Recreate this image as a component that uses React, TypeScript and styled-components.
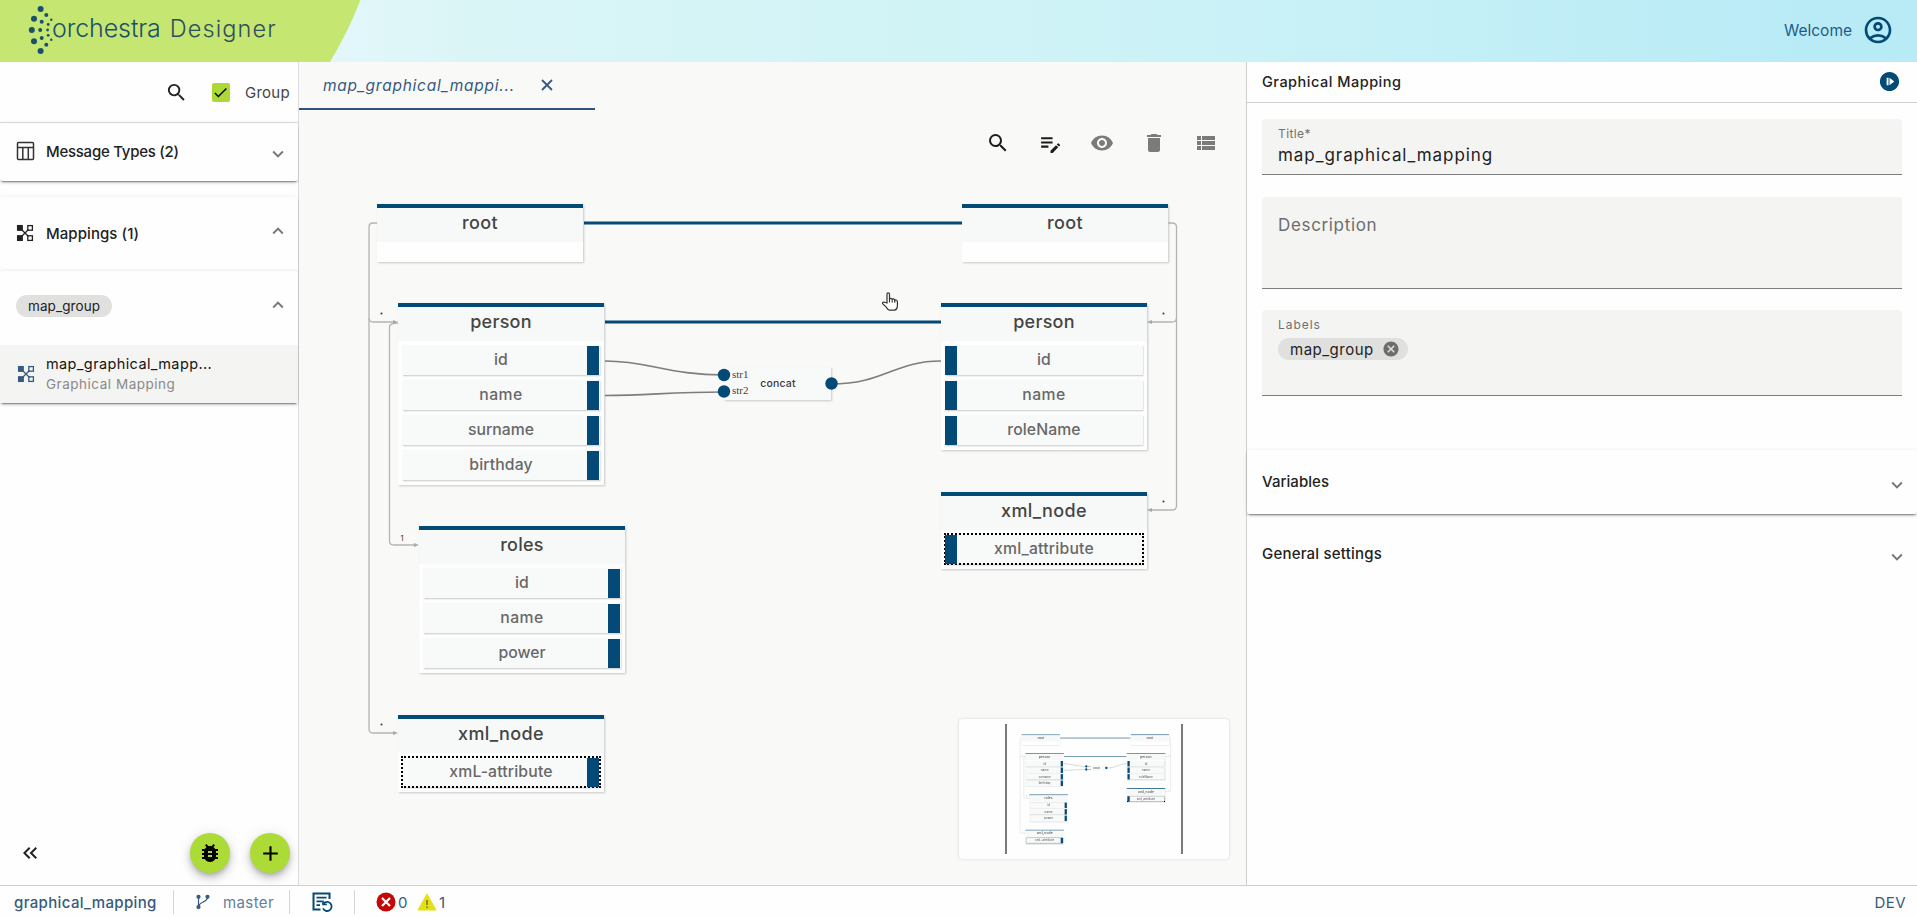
import React, { useState } from "react";
import styled, { createGlobalStyle } from "styled-components";
import {
  MdSearch,
  MdEditNote,
  MdVisibility,
  MdDelete,
  MdViewList,
  MdBugReport,
  MdAdd,
  MdKeyboardDoubleArrowLeft,
  MdOutlineAccountCircle,
  MdExpandMore,
  MdExpandLess,
  MdCancel,
  MdNotStarted,
  MdCheck,
} from "react-icons/md";

const GlobalStyle = createGlobalStyle`
  * {
    box-sizing: border-box;
  }
  body {
    margin: 0;
    background: #fefefe;
    color: #222;
    font-family: Inter, "Open Sans", sans-serif;
    overflow: hidden;
  }
`;

const NAVY = "#044a77";
const STEEL = "#365a80";

// --- shell ---
const Page = styled.div`
  display: grid;
  grid-template-rows: 62px 1fr 32px;
  width: 100vw;
  height: 100vh;
`;

const Main = styled.main`
  display: grid;
  grid-template-columns: 299px 1fr 671px;
  min-height: 0;
`;

// --- header ---
const Header = styled.header`
  display: flex;
  justify-content: space-between;
  background: linear-gradient(90deg, #e3f7fb 330px, #daf5f6 480px, #cbf2f7 1200px, #b9ebf6 1800px);
`;

const Brand = styled.div`
  display: flex;
  width: 361px;
  height: 62px;
  background: #c5e772;
  clip-path: path("M0 0 H360.5 Q348 32 330 62 H0 Z");
`;

const BrandName = styled.span`
  margin: 13px 0 0 -3px;
  font-size: 25px;
  font-weight: 300;
  line-height: 30px;
  letter-spacing: -0.1px;
  color: #1b4f6c;
`;

const ProductName = styled.span`
  margin: 14px 0 0 9px;
  font-size: 23.5px;
  font-weight: 300;
  line-height: 30px;
  letter-spacing: 1.1px;
  color: #2d4f5c;
`;

const UserArea = styled.div`
  display: flex;
  align-items: center;
  gap: 10px;
  height: 60px;
  padding-right: 23px;
  font-size: 15.5px;
  color: #1d5c8a;

  svg {
    color: ${NAVY};
  }
`;

// --- sidebar ---
const Sidebar = styled.aside`
  display: flex;
  flex-direction: column;
  border-right: 1px solid #dcdcdc;
`;

const FilterBar = styled.div`
  display: flex;
  align-items: center;
  justify-content: flex-end;
  height: 61px;
  padding-right: 8px;
  border-bottom: 1px solid #dcdcdc;
`;

const CheckBox = styled.button`
  display: grid;
  place-items: center;
  width: 18px;
  height: 19px;
  margin: 0 15px 0 24px;
  padding: 0;
  border: 0;
  border-radius: 2px;
  background: #acd938;
  color: #000;
`;

const GroupLabel = styled.label`
  font-size: 15px;
  letter-spacing: 0.29px;
  color: #444;
`;

const Panel = styled.section<{ $gap?: number }>`
  margin-top: ${(props) => props.$gap || 0}px;
  border-radius: 3px;
  background: #fefefe;
  box-shadow: 0 3px 1px -2px rgba(0, 0, 0, 0.3), 0 2px 2px rgba(0, 0, 0, 0.16),
    0 1px 5px rgba(0, 0, 0, 0.1);
`;

const InnerPanel = styled.div`
  border-radius: 3px;
  box-shadow: 0 -1px 3px rgba(0, 0, 0, 0.07);
`;

const PanelHead = styled.div<{ $height: number; $drop?: number }>`
  display: flex;
  align-items: center;
  height: ${(props) => props.$height}px;
  padding: 0 9px 2px 15px;
  font-size: 15px;
  font-weight: 500;

  > svg:first-child {
    margin-right: 11px;
  }
  > svg:last-child {
    margin-left: auto;
    color: #777;
    transform: translateY(${(props) => props.$drop || 0}px);
  }
`;

const PanelTitle = styled.span<{ $spacing: number }>`
  letter-spacing: ${(props) => props.$spacing}px;
`;

const Tag = styled.span`
  height: 22px;
  margin: -3px 0 0 1px;
  padding: 0 12px;
  border-radius: 11px;
  background: #e0e0df;
  font-size: 13.5px;
  font-weight: 400;
  line-height: 22px;
  letter-spacing: 0.1px;
`;

const Item = styled.div`
  display: flex;
  align-items: center;
  gap: 10px;
  height: 58px;
  padding-left: 16px;
  background: #f4f4f3;
  color: ${STEEL};
`;

const ItemName = styled.div`
  font-size: 14.5px;
  line-height: 20px;
  letter-spacing: 0.38px;
  color: #151515;
`;

const ItemKind = styled.div`
  font-size: 13.5px;
  line-height: 20px;
  letter-spacing: 0.52px;
  color: #8a8a8a;
`;

const SidebarActions = styled.div`
  display: flex;
  align-items: center;
  gap: 20px;
  height: 64px;
  margin-top: auto;
  padding: 0 8px 0 18px;

  > svg {
    margin-right: auto;
  }
`;

const RoundButton = styled.button`
  display: grid;
  place-items: center;
  width: 40px;
  height: 40px;
  padding: 0;
  border: 0;
  border-radius: 50%;
  background: #acda37;
  color: #000;
  box-shadow: 0 3px 5px -1px rgba(0, 0, 0, 0.2), 0 6px 10px rgba(0, 0, 0, 0.14),
    0 1px 14px rgba(0, 0, 0, 0.1);
`;

// --- editor ---
const Editor = styled.section`
  display: flex;
  flex-direction: column;
  background: #f9f9f8;
  min-width: 0;
`;

const Tab = styled.div`
  display: flex;
  align-items: center;
  justify-content: space-between;
  width: 296px;
  height: 48px;
  padding: 0 42px 0 24px;
  border-bottom: 2px solid #2f5579;
  font-size: 15.5px;
  font-style: italic;
  letter-spacing: 0.74px;
  color: ${STEEL};
`;

const Canvas = styled.div`
  position: relative;
  display: flex;
  flex: 1;
  flex-direction: column;
  justify-content: space-between;
  align-items: flex-end;
  padding: 21px 28px 26px 0;
`;

const Toolbar = styled.div`
  display: flex;
  gap: 28px;
`;

const Tool = styled.button<{ $enabled?: boolean }>`
  display: grid;
  place-items: center;
  width: 24px;
  height: 24px;
  padding: 0;
  border: 0;
  background: none;
  color: ${(props) => (props.$enabled ? "#1c1c1c" : "#7b7b7b")};
`;

const Layer = styled.div`
  position: absolute;
  left: 0;
  top: 0;
  width: 947px;
  height: 775px;
  pointer-events: none;
`;

const Edges = styled.svg`
  position: absolute;
  left: 0;
  top: 0;
`;

const PortLabel = styled.text`
  font-family: "Liberation Serif", serif;
  font-size: 11px;
  fill: #444;
`;

const NodeBox = styled.div<{ $x: number; $y: number }>`
  position: absolute;
  left: ${(props) => props.$x}px;
  top: ${(props) => props.$y}px;
  width: 206px;
  border-top: 4px solid ${NAVY};
  background: #fefefe;
  box-shadow: 1px 1px 2px rgba(0, 0, 0, 0.2);
`;

const NodeTitle = styled.div<{ $spacing: number }>`
  height: 34px;
  background: #f7f9f9;
  font-size: 18px;
  font-weight: 500;
  line-height: 29px;
  letter-spacing: ${(props) => props.$spacing}px;
  text-align: center;
  color: #454545;
`;

const Fields = styled.div<{ $empty: boolean }>`
  display: flex;
  flex-direction: column;
  gap: 5px;
  padding: ${(props) => (props.$empty ? "20px 0 0" : "4px 4px 5px 4px")};
`;

const Field = styled.div<{ $dotted?: boolean }>`
  display: grid;
  grid-template-columns: 12px 1fr 12px;
  height: 30px;
  padding-top: 1px;
  background: #f8f9f9;
  box-shadow: 0.5px 1px 1.5px rgba(0, 0, 0, 0.25);
  outline: ${(props) => (props.$dotted ? "2px dotted #000" : "none")};
  outline-offset: -1px;
`;

const FieldName = styled.span<{ $spacing: number }>`
  grid-column: 2;
  font-size: 15.75px;
  font-weight: 500;
  line-height: 28px;
  letter-spacing: ${(props) => props.$spacing}px;
  text-align: center;
  color: #686868;
`;

const Port = styled.i<{ $side: "left" | "right" }>`
  grid-column: ${(props) => (props.$side === "left" ? 1 : 3)};
  grid-row: 1;
  position: relative;
  left: ${(props) => (props.$side === "left" ? 0 : -1)}px;
  background: ${NAVY};
`;

const FunctionBox = styled.div`
  position: absolute;
  left: 425px;
  top: 257px;
  width: 107px;
  height: 33px;
  display: grid;
  place-items: center;
  padding: 0 0 1px 1px;
  background: #f8f9f9;
  box-shadow: 1px 1px 2px rgba(0, 0, 0, 0.2);
  font-size: 10.5px;
  font-weight: 500;
  letter-spacing: 0.2px;
  color: #3c3c3c;
`;

const Minimap = styled.div`
  position: relative;
  width: 270px;
  height: 140px;
  overflow: hidden;
  border-radius: 4px;
  background: #fefefe;
  box-shadow: 0 0 3px rgba(0, 0, 0, 0.15);
  margin-right: -11px;
`;

const MinimapScale = styled.div`
  position: absolute;
  left: 47.5px;
  top: -2.5px;
  transform: scale(0.1865);
  transform-origin: 0 0;
`;

const Viewport = styled.div`
  position: absolute;
  left: 46px;
  top: 5px;
  width: 178px;
  height: 130px;
  border: solid #7a7a7a;
  border-width: 0 2px;
`;

const Cursor = styled.svg`
  position: absolute;
  left: 582px;
  top: 181px;
`;

// --- properties ---
const Properties = styled.aside`
  border-left: 1px solid #cfcfcf;
`;

const PropertiesHead = styled.div`
  display: flex;
  align-items: center;
  justify-content: space-between;
  height: 41px;
  padding: 0 16px 2px 15px;
  border-bottom: 1px solid #cfcfcf;
  font-size: 14.5px;
  font-weight: 500;
  letter-spacing: 0.5px;

  svg {
    color: ${NAVY};
  }
`;

const Form = styled.div`
  display: grid;
  padding: 16px 15px 0;
`;

const FormField = styled.div<{ $height: number; $gap?: number }>`
  height: ${(props) => props.$height}px;
  margin-top: ${(props) => props.$gap || 0}px;
  padding: 7px 16px;
  border-bottom: 1px solid #7e7e7e;
  border-radius: 4px 4px 0 0;
  background: #f4f4f3;
`;

const Label = styled.div<{ $spacing: number }>`
  font-size: 12px;
  line-height: 16px;
  letter-spacing: ${(props) => props.$spacing}px;
  color: #707070;
`;

const Value = styled.div`
  margin-top: 3px;
  font-size: 17px;
  line-height: 21px;
  letter-spacing: 0.95px;
`;

const Placeholder = styled.div`
  margin-top: 10px;
  font-size: 17px;
  line-height: 22px;
  letter-spacing: 0.66px;
  color: #6d6d6d;
`;

const Chip = styled.span`
  display: inline-flex;
  align-items: center;
  gap: 8px;
  height: 22px;
  margin-top: 5px;
  padding: 0 8px 0 12px;
  border-radius: 11px;
  background: #e0e0df;
  font-size: 15px;
  letter-spacing: 0.5px;

  svg {
    color: #6d6d6d;
  }
`;

const SettingsPanels = styled.div`
  margin-top: 54px;
`;

// --- status bar ---
const StatusBar = styled.footer`
  display: flex;
  align-items: center;
  border-top: 1px solid #cfcfcf;
  padding: 1px 11px 0 14px;
  font-size: 15px;
  color: ${STEEL};
`;

const Project = styled.span`
  width: 159px;
  font-weight: 500;
  letter-spacing: 0.35px;
`;

const StatusCell = styled.div<{ $width: number; $gap?: number }>`
  display: flex;
  align-items: center;
  gap: ${(props) => props.$gap || 0}px;
  width: ${(props) => props.$width}px;
  height: 24px;
  padding-left: 21px;
  border-left: 1px solid #d5d5d5;
`;

const Branch = styled.span`
  letter-spacing: 0.4px;
  color: #647f99;
`;

const Count = styled.span`
  width: 17px;
`;

const Stage = styled.span`
  margin-left: auto;
  font-size: 15px;
  letter-spacing: 0.4px;
`;

const logoDots = [
  [40.6, 9, 3], [46.3, 15, 2], [34, 18.7, 3], [51.3, 19.7, 1.2], [41.7, 21.7, 2],
  [48.2, 24.5, 1.4], [31.8, 30, 3], [40.2, 30, 2], [47.6, 30, 1.4], [48.2, 35.3, 1.4],
  [41.7, 38, 2], [51.3, 39.7, 1.2], [34, 41.3, 3], [46.3, 44.7, 2], [40.6, 51, 3],
];

function LogoMark() {
  return (
    <svg width="55" height="62">
      {logoDots.map(([x, y, r]) => (
        <circle key={`${x}-${y}`} cx={x} cy={y} r={r} fill="#1b4f6c" />
      ))}
    </svg>
  );
}

function TableIcon() {
  return (
    <svg width="20" height="20" fill="none" stroke="#333" strokeWidth="1.5">
      <rect x="2.5" y="1.5" width="16" height="17" rx="1" />
      <path d="M2.5 6.6H18.5M7.8 6.6V18.5M13.3 6.6V18.5" />
    </svg>
  );
}

function MappingIcon() {
  return (
    <svg width="20" height="20" fill="none" stroke="currentColor" strokeWidth="1.3">
      <path d="M6.5 6.5L13.5 13.5M13.5 6.5L6.5 13.5" />
      <rect x="2.6" y="2.6" width="4.6" height="4.6" fill="currentColor" />
      <rect x="2.6" y="12.8" width="4.6" height="4.6" fill="currentColor" />
      <rect x="12.8" y="2.6" width="4.6" height="4.6" />
      <rect x="12.8" y="12.8" width="4.6" height="4.6" />
    </svg>
  );
}

function BranchIcon() {
  return (
    <svg width="16" height="16" fill="none" stroke={STEEL} strokeWidth="1.2">
      <path d="M3.5 3V13M12.5 3C12.5 9 4 7 3.5 13" />
      <circle cx="3.5" cy="2.8" r="1.5" fill={STEEL} />
      <circle cx="12.5" cy="2.8" r="1.5" fill={STEEL} />
      <circle cx="3.5" cy="13" r="1.5" fill={STEEL} />
    </svg>
  );
}

function HistoryIcon() {
  return (
    <svg width="22" height="22" fill="none" stroke={NAVY} strokeWidth="2">
      <path d="M18.5 8V2.5H2.5V18.5H9.5" />
      <path d="M5.5 6.6H15.5M5.5 10.4H11M5.5 14.2H9" strokeWidth="1.8" />
      <path d="M12.6 12.6A4.5 4.5 0 1 1 12 17.4" strokeWidth="1.8" />
      <path d="M12 9.6V13.4H15.8" strokeWidth="1.7" />
    </svg>
  );
}

function ErrorIcon() {
  return (
    <svg width="20" height="20">
      <circle cx="10" cy="10" r="9.5" fill="#c40808" />
      <path d="M6 6L14 14M14 6L6 14" stroke="#fff" strokeWidth="2.2" />
    </svg>
  );
}

function WarningIcon() {
  return (
    <svg width="20" height="18">
      <path d="M10 1L19 17H1Z" fill="#e4e016" stroke="#e4e016" />
      <path d="M10 7V12M10 13.5V15" stroke="#707020" strokeWidth="1.5" />
    </svg>
  );
}

type GraphNode = {
  name: string;
  spacing: number;
  x: number;
  y: number;
  side: "left" | "right";
  fields: [string, number][];
  dotted?: boolean;
};

const nodes: GraphNode[] = [
  { name: "root", spacing: 0.4, x: 78, y: 94, side: "right", fields: [] },
  {
    name: "person", spacing: 0.25, x: 99, y: 193, side: "right",
    fields: [["id", 0.1], ["name", 0.4], ["surname", 0], ["birthday", 0.11]],
  },
  {
    name: "roles", spacing: 0.25, x: 120, y: 416, side: "right",
    fields: [["id", 0.1], ["name", 0.4], ["power", 0]],
  },
  { name: "xml_node", spacing: 0.35, x: 99, y: 605, side: "right", fields: [["xmL-attribute", 0.16]], dotted: true },
  { name: "root", spacing: 0.4, x: 663, y: 94, side: "left", fields: [] },
  {
    name: "person", spacing: 0.25, x: 642, y: 193, side: "left",
    fields: [["id", 0.1], ["name", 0.4], ["roleName", 0.1]],
  },
  { name: "xml_node", spacing: 0.35, x: 642, y: 382, side: "left", fields: [["xml_attribute", 0.2]], dotted: true },
];

function Diagram() {
  return (
    <Layer>
      <Edges width="947" height="775" fill="none">
        <path d="M285 113H663M306 212H642" stroke={NAVY} strokeWidth="3" />
        <g stroke="#b4b4b4" strokeWidth="1.3">
          <path d="M78 113H74Q70 113 70 117V208Q70 212 74 212H95" />
          <path d="M70 208V619Q70 623 74 623H95" />
          <path d="M99 213Q90.5 213 90.5 217V431Q90.5 435 95 435H116" />
          <path d="M869.5 113H873Q877.5 113 877.5 117V208Q877.5 212 873 212H853" />
          <path d="M877.5 208V396Q877.5 400 873 400H853" />
        </g>
        <g fill="#a9a9a9">
          <path d="M94 210L99 212L94 214Z M94 621L99 623L94 625Z M115 433L120 435L115 437Z" />
          <path d="M853 210L848 212L853 214Z M853 398L848 400L853 402Z" />
        </g>
        <g stroke="#7d7d7d" strokeWidth="1.6">
          <path d="M306 251C350 251 370 265 425 265M306 285.5C350 285.5 370 282 425 282" />
          <path d="M532 274C585 274 595 251 642 251" />
        </g>
        <g fill="#333">
          <circle cx="82.5" cy="203.5" r="1" />
          <circle cx="82.5" cy="614.5" r="1" />
          <circle cx="864.5" cy="203.5" r="1" />
          <circle cx="864.5" cy="391.5" r="1" />
        </g>
        <text x="101.5" y="431" fontSize="7.5" fill="#333">1</text>
      </Edges>
      {nodes.map((node) => (
        <NodeBox key={`${node.x}-${node.y}`} $x={node.x} $y={node.y}>
          <NodeTitle $spacing={node.spacing}>{node.name}</NodeTitle>
          <Fields $empty={node.fields.length === 0}>
            {node.fields.map(([field, spacing]) => (
              <Field key={field} $dotted={node.dotted}>
                <Port $side={node.side} />
                <FieldName $spacing={spacing}>{field}</FieldName>
              </Field>
            ))}
          </Fields>
        </NodeBox>
      ))}
      <FunctionBox>concat</FunctionBox>
      <Edges width="947" height="775">
        <g fill={NAVY}>
          <circle cx="425" cy="265" r="6.2" />
          <circle cx="425" cy="281.5" r="6.2" />
          <circle cx="532.5" cy="273.5" r="6.2" />
        </g>
        <PortLabel x="433" y="268">str1</PortLabel>
        <PortLabel x="433" y="284">str2</PortLabel>
      </Edges>
    </Layer>
  );
}

export default function App() {
  const [grouped, setGrouped] = useState(true);

  return (
    <Page>
      <GlobalStyle />
      <Header>
        <Brand>
          <LogoMark />
          <BrandName>orchestra</BrandName>
          <ProductName>Designer</ProductName>
        </Brand>
        <UserArea>
          Welcome
          <MdOutlineAccountCircle size={32} />
        </UserArea>
      </Header>

      <Main>
        <Sidebar>
          <FilterBar>
            <MdSearch size={23} />
            <CheckBox onClick={() => setGrouped(!grouped)}>{grouped && <MdCheck size={17} />}</CheckBox>
            <GroupLabel>Group</GroupLabel>
          </FilterBar>

          <Panel>
            <PanelHead $height={58} $drop={3}>
              <TableIcon />
              <PanelTitle $spacing={-0.26}>Message Types (2)</PanelTitle>
              <MdExpandMore size={22} />
            </PanelHead>
          </Panel>

          <Panel $gap={16}>
            <PanelHead $height={74} $drop={-2}>
              <MappingIcon />
              <PanelTitle $spacing={0.07}>Mappings (1)</PanelTitle>
              <MdExpandLess size={22} />
            </PanelHead>
            <InnerPanel>
              <PanelHead $height={74} $drop={-2}>
                <Tag>map_group</Tag>
                <MdExpandLess size={22} />
              </PanelHead>
              <Item>
                <MappingIcon />
                <div>
                  <ItemName>map_graphical_mapp...</ItemName>
                  <ItemKind>Graphical Mapping</ItemKind>
                </div>
              </Item>
            </InnerPanel>
          </Panel>

          <SidebarActions>
            <MdKeyboardDoubleArrowLeft size={24} />
            <RoundButton><MdBugReport size={24} /></RoundButton>
            <RoundButton><MdAdd size={25} /></RoundButton>
          </SidebarActions>
        </Sidebar>

        <Editor>
          <Tab>
            map_graphical_mappi...
            <svg width="12" height="12" stroke={STEEL} strokeWidth="1.8">
              <path d="M1 1L11 11M11 1L1 11" />
            </svg>
          </Tab>
          <Canvas>
            <Diagram />
            <Toolbar>
              <Tool $enabled><MdSearch size={24} /></Tool>
              <Tool $enabled><MdEditNote size={25} /></Tool>
              <Tool><MdVisibility size={24} /></Tool>
              <Tool><MdDelete size={24} /></Tool>
              <Tool><MdViewList size={24} /></Tool>
            </Toolbar>
            <Minimap>
              <MinimapScale>
                <Diagram />
              </MinimapScale>
              <Viewport />
            </Minimap>
            <Cursor width="20" height="22" viewBox="0 0 20 22">
              <path
                d="M6 12V3.2Q6 1.8 7.2 1.8T8.5 3.2V8.5Q8.6 7.3 9.8 7.3T11.2 8.7Q11.4 7.8 12.4 7.9T13.8 9.4Q14.2 8.7 15.2 9T16.4 10.5V15Q16.2 18.5 13.8 19.2H8.5Q6.5 18.5 5.5 16.4L1.6 12.8Q1.2 11.2 2.8 11Z"
                fill="#fff"
                stroke="#333"
                strokeWidth="1.2"
              />
              <path d="M8.5 8V11.5M11.2 8.5V11.5M13.8 9.2V11.8" stroke="#333" strokeWidth="1.1" />
            </Cursor>
          </Canvas>
        </Editor>

        <Properties>
          <PropertiesHead>
            Graphical Mapping
            <MdNotStarted size={23} />
          </PropertiesHead>
          <Form>
            <FormField $height={56}>
              <Label $spacing={0.4}>Title*</Label>
              <Value>map_graphical_mapping</Value>
            </FormField>
            <FormField $height={92} $gap={22}>
              <Placeholder>Description</Placeholder>
            </FormField>
            <FormField $height={86} $gap={21}>
              <Label $spacing={0.95}>Labels</Label>
              <Chip>
                map_group
                <MdCancel size={18} />
              </Chip>
            </FormField>
          </Form>
          <SettingsPanels>
            <Panel>
              <PanelHead $height={64} $drop={4}>
                <PanelTitle $spacing={0.05}>Variables</PanelTitle>
                <MdExpandMore size={22} />
              </PanelHead>
            </Panel>
            <PanelHead $height={80} $drop={4}>
              <PanelTitle $spacing={0.2}>General settings</PanelTitle>
              <MdExpandMore size={22} />
            </PanelHead>
          </SettingsPanels>
        </Properties>
      </Main>

      <StatusBar>
        <Project>graphical_mapping</Project>
        <StatusCell $width={116} $gap={12}>
          <BranchIcon />
          <Branch>master</Branch>
        </StatusCell>
        <StatusCell $width={65}>
          <HistoryIcon />
        </StatusCell>
        <StatusCell $width={130} $gap={2}>
          <ErrorIcon />
          <Count>0</Count>
          <WarningIcon />
          <Count>1</Count>
        </StatusCell>
        <Stage>DEV</Stage>
      </StatusBar>
    </Page>
  );
}
